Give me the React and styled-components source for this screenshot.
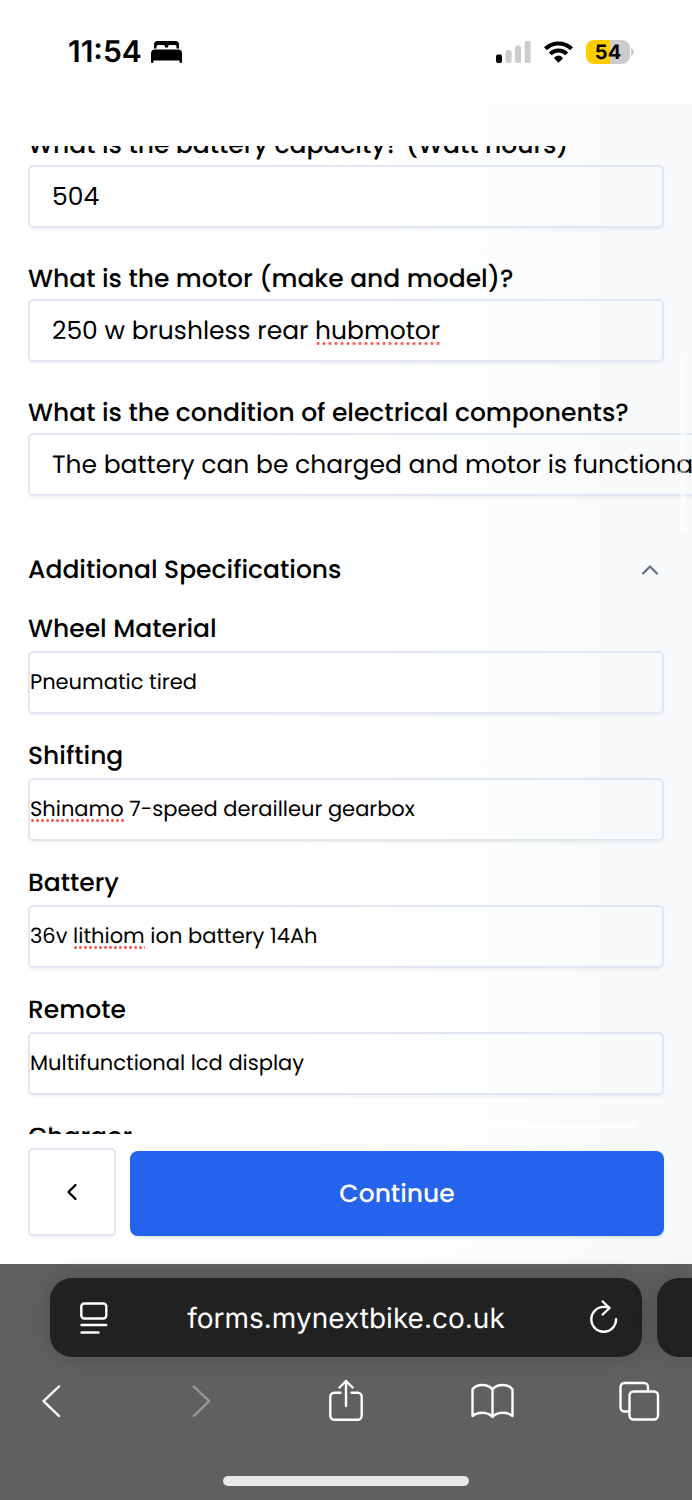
import React, { useLayoutEffect, useRef, useState } from 'react'
import styled, { createGlobalStyle } from 'styled-components'
import { ChevronLeft, ChevronUp } from 'lucide-react'

const electricFields = [
  { id: 'capacity', label: 'What is the battery capacity? (Watt hours)', value: '504' },
  { id: 'motor', label: 'What is the motor (make and model)?', value: '250 w brushless rear hubmotor', typo: 'hubmotor' },
  { id: 'condition', label: 'What is the condition of electrical components?', value: 'The battery can be charged and motor is functional', wide: true },
]

const specFields = [
  { id: 'wheel', label: 'Wheel Material', value: 'Pneumatic tired' },
  { id: 'shifting', label: 'Shifting', value: 'Shinamo 7-speed derailleur gearbox', typo: 'Shinamo' },
  { id: 'battery', label: 'Battery', value: '36v lithiom ion battery 14Ah', typo: 'lithiom' },
  { id: 'remote', label: 'Remote', value: 'Multifunctional lcd display' },
  { id: 'charger', label: 'Charger', value: '' },
]

const Field = ({ id, label, value, typo, wide, compact }) => {
  const inputRef = useRef(null)
  const [mark, setMark] = useState(null)

  // find where the misspelled word sits inside the input
  useLayoutEffect(() => {
    if (!typo) return
    const style = getComputedStyle(inputRef.current)
    const ctx = document.createElement('canvas').getContext('2d')
    ctx.font = `${style.fontWeight} ${style.fontSize} ${style.fontFamily}`
    const before = ctx.measureText(value.slice(0, value.indexOf(typo))).width
    setMark({
      left: before + parseInt(style.paddingLeft) + parseInt(style.borderLeftWidth),
      width: ctx.measureText(typo).width,
    })
  }, [typo, value])

  return (
    <FieldDiv $compact={compact}>
      <FieldLabel htmlFor={id}>{label}</FieldLabel>
      <InputWrap>
        <FieldInput
          ref={inputRef}
          id={id}
          type="text"
          defaultValue={value}
          spellCheck={false}
          $wide={wide}
          $compact={compact}
        />
        {mark && <TypoMark style={mark} $compact={compact} />}
      </InputWrap>
    </FieldDiv>
  )
}

const StatusBar = () => (
  <StatusHeader>
    <StatusGroup $gap={9}>
      <Clock>11:54</Clock>
      <svg width="31" height="22" viewBox="0 0 31 22">
        <path d="M3 7.500V3.500A3.500 3.500 0 0 1 6.500 0h18A3.500 3.500 0 0 1 28 3.500v4h-2.500V5.500A1.500 1.500 0 0 0 24 4h-5.500A1.500 1.500 0 0 0 17 5.500v1h-3v-1A1.500 1.500 0 0 0 12.500 4H7A1.500 1.500 0 0 0 5.500 5.500v2z" />
        <path d="M0 21V12.500A4 4 0 0 1 4 8.500h23a4 4 0 0 1 4 4V21a1 1 0 0 1-1 1h-.500a1 1 0 0 1-1-1v-1.500h-26V21a1 1 0 0 1-1 1H1a1 1 0 0 1-1-1z" />
      </svg>
    </StatusGroup>
    <StatusGroup $gap={13}>
      <svg width="35" height="22" viewBox="0 0 35 22">
        <rect x="0" y="13.500" width="6" height="8.500" rx="2" />
        <g fill="#cccccc">
          <rect x="9.600" y="9" width="6" height="13" rx="2" />
          <rect x="19" y="4.500" width="6" height="17.500" rx="2" />
          <rect x="28.600" y="0" width="6" height="22" rx="2" />
        </g>
      </svg>
      <svg width="29" height="22" viewBox="0 0 29 22">
        <g fill="none" stroke="#000" strokeWidth="4.100">
          <path d="M1.400 7.800a18.700 18.700 0 0 1 26.200 0" />
          <path d="M6.300 12.900a11.700 11.700 0 0 1 16.400 0" />
        </g>
        <path d="M14.500 21.800l-4-4.100a1 1 0 0 1 .100-1.500a6.200 6.200 0 0 1 7.800 0a1 1 0 0 1 .100 1.500z" />
      </svg>
      <BatteryDiv>
        <BatteryBody>54</BatteryBody>
        <svg width="4" height="8" viewBox="0 0 4 8">
          <path d="M1 0c4 1.600 4 6.400 0 8z" fill="#cccccc" />
        </svg>
      </BatteryDiv>
    </StatusGroup>
  </StatusHeader>
)

const BrowserBar = () => (
  <BrowserFooter>
    <TabRow>
      <AddressBar>
        <IconButton $size={40} aria-label="Page menu">
          <svg width="40" height="40" viewBox="0 0 40 40">
            <rect x="13.300" y="5.500" width="25" height="15" rx="3" />
            <path d="M13.500 27h24.700M13.500 34.500h17" />
          </svg>
        </IconButton>
        <Address href="#">forms.mynextbike.co.uk</Address>
        <IconButton $size={40} aria-label="Reload">
          <svg width="40" height="40" viewBox="0 0 40 40">
            <path d="M25.500 9.600C23.500 9 21.500 8.900 19.700 8.900A12.400 12.400 0 1 0 32.100 21.300M18.700 3.500l6.800 6.500-6.800 6.500" />
          </svg>
        </IconButton>
      </AddressBar>
      <NextTab />
    </TabRow>
    <ToolRow>
      <IconButton $size={48} aria-label="Back">
        <svg width="48" height="48" viewBox="0 0 48 48">
          <path d="M32 9.500L16.500 24.200L32 39" />
        </svg>
      </IconButton>
      <IconButton $size={48} disabled aria-label="Forward">
        <svg width="48" height="48" viewBox="0 0 48 48">
          <path d="M19.700 9.500L35.200 24.200L19.700 39" />
        </svg>
      </IconButton>
      <IconButton $size={48} aria-label="Share">
        <svg width="48" height="48" viewBox="0 0 48 48">
          <path d="M19.500 15.700h-6.200a4 4 0 0 0-4 4v19a4 4 0 0 0 4 4h23.400a4 4 0 0 0 4-4v-19a4 4 0 0 0-4-4H30.500M25 29V4M18.500 10.500l6.500-6.500 6.500 6.500" />
        </svg>
      </IconButton>
      <IconButton $size={48} aria-label="Bookmarks">
        <svg width="48" height="48" viewBox="0 0 48 48">
          <path d="M4.500 12.500C8.500 6.500 20 6.500 24.500 12.500C29 6.500 40.500 6.500 44.500 12.500V39C39.500 34.500 29 34.500 24.500 40C20 34.500 9.500 34.500 4.500 39zM24.500 12.500V40" />
        </svg>
      </IconButton>
      <IconButton $size={48} aria-label="Tabs">
        <svg width="48" height="48" viewBox="0 0 48 48">
          <path d="M14 34.500H9.500A4 4 0 0 1 5.500 30.500V10A4 4 0 0 1 9.500 6H29a4 4 0 0 1 4 4V14" />
          <rect x="14.500" y="14.500" width="28.500" height="28" rx="4" />
        </svg>
      </IconButton>
    </ToolRow>
    <HomeIndicator />
  </BrowserFooter>
)

const App = () => {
  const listRef = useRef(null)

  useLayoutEffect(() => {
    listRef.current.scrollTop = 21
  }, [])

  return (
    <>
      <GlobalStyle />
      <Screen>
        <StatusBar />
        <FormMain>
          <ScrollArea>
            <FieldList ref={listRef}>
              <ElectricGroup>
                {electricFields.map((field) => <Field key={field.id} {...field} />)}
              </ElectricGroup>
              <SectionButton aria-expanded="true">
                Additional Specifications
                <ChevronUp size={28} color="#64748b" />
              </SectionButton>
              <SpecGroup>
                {specFields.map((field) => <Field key={field.id} compact {...field} />)}
              </SpecGroup>
            </FieldList>
            <ScrollThumbY />
            <ScrollThumbX />
          </ScrollArea>
          <ActionRow>
            <BackButton aria-label="Previous step">
              <ChevronLeft size={28} />
            </BackButton>
            <ContinueButton>Continue</ContinueButton>
          </ActionRow>
        </FormMain>
        <BrowserBar />
      </Screen>
    </>
  )
}

export default App

const GlobalStyle = createGlobalStyle`
  * {
    box-sizing: border-box;
  }
  body {
    margin: 0;
    font-family: Poppins, Inter, sans-serif;
    color: #000;
    text-rendering: geometricPrecision;
  }
  button, input {
    margin: 0;
    font-family: inherit;
    color: inherit;
    text-rendering: inherit;
  }
  svg {
    display: block;
    flex-shrink: 0;
  }
`

const Screen = styled.div`
  height: 100vh;
  display: flex;
  flex-direction: column;
  overflow: hidden;
  background-color: white;
`

// * Status bar
const StatusHeader = styled.header`
  height: 104px;
  padding: 0 58px 0 68px;
  flex-shrink: 0;
  display: flex;
  justify-content: space-between;
  align-items: center;
`

const StatusGroup = styled.div`
  display: flex;
  align-items: center;
  gap: ${({ $gap }) => $gap}px;
`

const Clock = styled.span`
  font-family: Inter, sans-serif;
  font-size: 30px;
  font-weight: 600;
`

const BatteryDiv = styled.div`
  display: flex;
  align-items: center;
`

const BatteryBody = styled.span`
  width: 44px;
  height: 24px;
  border-radius: 8px;
  background: linear-gradient(90deg, #ffcc00 54%, #cccccc 54%);
  font-family: Inter, sans-serif;
  font-size: 20px;
  font-weight: 700;
  line-height: 24px;
  text-align: center;
`

// * Form
const FormMain = styled.main`
  min-height: 0;
  padding-top: 42px;
  flex: 1;
  display: flex;
  flex-direction: column;
  background: linear-gradient(90deg, #ffffff 40%, #fbfcfc 75%, #f7f9fa);
`

const ScrollArea = styled.div`
  position: relative;
  min-height: 0;
  flex: 1;
  display: flex;
  flex-direction: column;
`

const FieldList = styled.div`
  min-height: 0;
  padding: 0 28px;
  flex: 1;
  overflow: auto;
  scrollbar-width: none;
`

const ElectricGroup = styled.div`
  display: flex;
  flex-direction: column;
  gap: 31px;
`

const SpecGroup = styled.div`
  display: flex;
  flex-direction: column;
  gap: 22px;
`

const SectionButton = styled.button`
  width: 100%;
  margin: 54px 0 19px;
  padding: 0;
  display: flex;
  justify-content: space-between;
  align-items: center;
  border: none;
  background: none;
  font-size: 25px;
  font-weight: 500;
  line-height: 40px;
  cursor: pointer;
`

const FieldDiv = styled.div`
  display: flex;
  flex-direction: column;
  gap: ${({ $compact }) => ($compact ? 2 : 0)}px;
`

const FieldLabel = styled.label`
  font-size: 25px;
  font-weight: 500;
  line-height: 40px;
  white-space: nowrap;
`

const InputWrap = styled.div`
  position: relative;
`

const FieldInput = styled.input`
  display: block;
  width: ${({ $wide }) => ($wide ? 'calc(100% + 80px)' : '100%')};
  height: 63px;
  padding: 0 ${({ $compact }) => ($compact ? 0 : 22)}px;
  border: 2px solid #e2e6f2;
  border-radius: 5px;
  background: transparent;
  box-shadow: 0 2px 3px rgba(0, 0, 0, 0.05);
  font-size: ${({ $compact }) => ($compact ? 21 : 25)}px;
  &:focus {
    outline: none;
  }
`

const TypoMark = styled.span`
  position: absolute;
  bottom: ${({ $compact }) => ($compact ? 19 : 17)}px;
  height: 3px;
  background: radial-gradient(circle, #ff5a52 1px, transparent 2px) 0 0 / ${({ $compact }) => ($compact ? 5 : 6)}px 3px repeat-x;
  pointer-events: none;
`

const ScrollThumbY = styled.span`
  position: absolute;
  top: 207px;
  right: 6px;
  width: 6px;
  height: 180px;
  border-radius: 3px;
  background-color: rgba(255, 255, 255, 0.5);
`

const ScrollThumbX = styled.span`
  position: absolute;
  left: 6px;
  right: 56px;
  bottom: 6px;
  height: 5px;
  border-radius: 3px;
  background-color: rgba(255, 255, 255, 0.5);
`

const ActionRow = styled.div`
  padding: 14px 28px 28px;
  display: flex;
  align-items: flex-end;
  gap: 14px;
`

const BackButton = styled.button`
  width: 88px;
  height: 88px;
  display: flex;
  justify-content: center;
  align-items: center;
  border: 2px solid #e2e6f2;
  border-radius: 5px;
  background-color: white;
  box-shadow: 0 2px 3px rgba(0, 0, 0, 0.05);
  cursor: pointer;
`

const ContinueButton = styled.button`
  height: 85px;
  flex: 1;
  border: none;
  border-radius: 8px;
  background-color: #2463eb;
  box-shadow: 0 2px 3px rgba(0, 0, 0, 0.1);
  color: white;
  font-size: 25px;
  font-weight: 500;
  cursor: pointer;
`

// * Browser
const BrowserFooter = styled.footer`
  padding: 14px 0;
  flex-shrink: 0;
  background-color: #606060;
`

const TabRow = styled.div`
  padding-left: 50px;
  display: flex;
  gap: 15px;
`

const AddressBar = styled.div`
  height: 79px;
  padding: 0 18px;
  flex: 1;
  display: flex;
  justify-content: space-between;
  align-items: center;
  border-radius: 22px;
  background-color: #212121;
  box-shadow: 0 0 26px rgba(0, 0, 0, 0.18);
`

const NextTab = styled.div`
  width: 35px;
  border-radius: 22px 0 0 22px;
  background-color: #212121;
  box-shadow: 0 0 26px rgba(0, 0, 0, 0.18);
`

const Address = styled.a`
  color: white;
  font-family: Inter, sans-serif;
  font-size: 28px;
  text-decoration: none;
`

const IconButton = styled.button`
  width: ${({ $size }) => $size}px;
  height: ${({ $size }) => $size}px;
  padding: 0;
  border: none;
  background: none;
  color: white;
  cursor: pointer;
  svg {
    fill: none;
    stroke: currentColor;
    stroke-width: 2.4;
    stroke-linecap: round;
    stroke-linejoin: round;
  }
  &:disabled {
    color: #979797;
  }
`

const ToolRow = styled.div`
  padding: 20px 29px 51px 27px;
  display: flex;
  justify-content: space-between;
`

const HomeIndicator = styled.div`
  width: 246px;
  height: 10px;
  margin: 0 auto;
  border-radius: 5px;
  background-color: #e8e8e8;
`
